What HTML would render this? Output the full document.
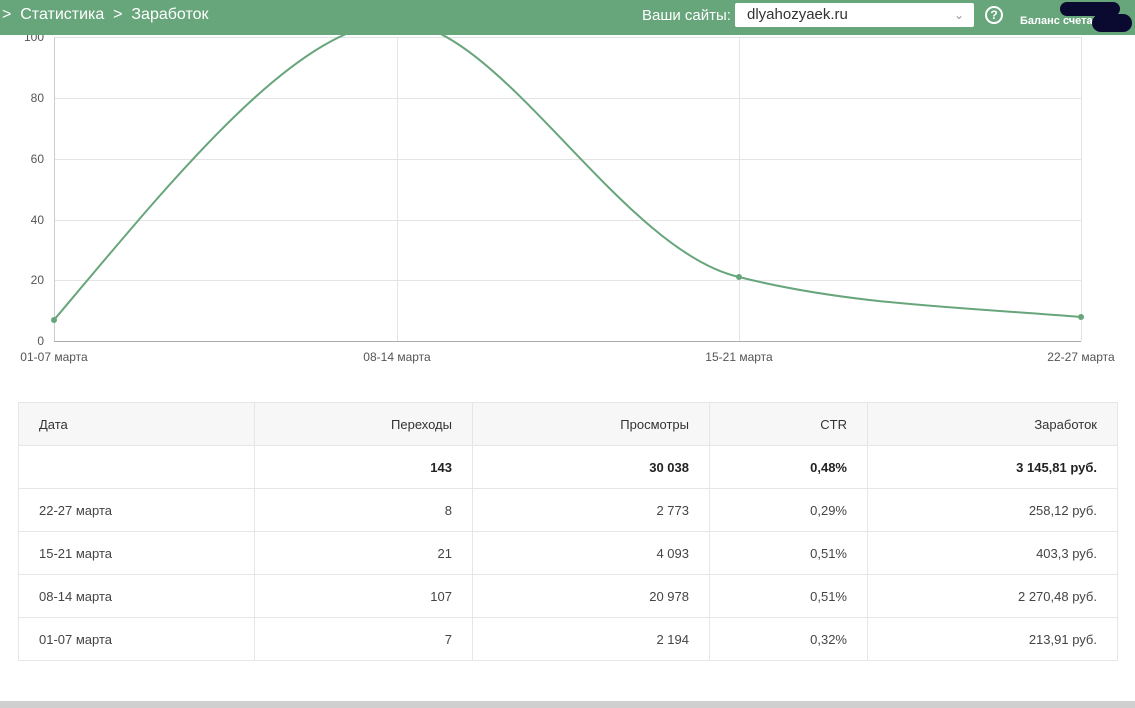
<!DOCTYPE html><html><head><meta charset="utf-8"><style>
body{margin:0;width:1135px;height:708px;overflow:hidden;background:#fff;font-family:"Liberation Sans",sans-serif;position:relative}
.hdr{position:absolute;left:0;top:0;width:1135px;height:35px;background:#67a57b;color:#fff;z-index:2}
.hdr .bc{position:absolute;left:2px;top:6px;font-size:16px}
.sel{position:absolute;left:735px;top:3px;width:239px;height:24px;background:#fff;border-radius:2px;color:#333;font-size:15px;line-height:24px;padding-left:12px;box-sizing:border-box}
table{position:absolute;left:18px;top:402px;width:1100px;border-collapse:collapse;font-size:13px;color:#444}
td,th{border:1px solid #e6e6e6;height:42px;padding:0 20px;text-align:right;font-weight:normal}
th{background:#f7f7f7;color:#333}
td:first-child,th:first-child{text-align:left}
.b td{font-weight:bold;color:#222}
table th:nth-child(1){width:195px}table th:nth-child(2){width:177px}table th:nth-child(3){width:196px}table th:nth-child(4){width:117px}
</style></head><body>
<div class="hdr"><div class="bc"><span style="font-weight:100">&gt;</span>&nbsp; Статистика &nbsp;<span>&gt;</span>&nbsp; Заработок</div>
<div style="position:absolute;left:642px;top:7px;font-size:15px">Ваши сайты:</div>
<div class="sel">dlyahozyaek.ru<span style="position:absolute;right:10px;top:0;color:#999;font-size:12px">&#8964;</span></div>
<div style="position:absolute;left:985px;top:6px;width:18px;height:18px;border:2px solid #fff;border-radius:50%;box-sizing:border-box;font-size:12px;text-align:center;line-height:15px;font-weight:bold">?</div>
<div style="position:absolute;left:1020px;top:15px;font-size:11px;font-weight:bold">Баланс счета</div>
<div style="position:absolute;left:1060px;top:2px;width:60px;height:14px;background:#0a0a30;border-radius:8px"></div>
<div style="position:absolute;left:1092px;top:14px;width:40px;height:18px;background:#0a0a30;border-radius:9px"></div>
</div>
<svg style="position:absolute;left:0;top:0" width="1135" height="380">
<g stroke="#e4e4e4" stroke-width="1">
<line x1="54" y1="37.5" x2="1081" y2="37.5"/><line x1="54" y1="98.5" x2="1081" y2="98.5"/><line x1="54" y1="159.5" x2="1081" y2="159.5"/><line x1="54" y1="220.5" x2="1081" y2="220.5"/><line x1="54" y1="280.5" x2="1081" y2="280.5"/>
<line x1="397.5" y1="37" x2="397.5" y2="341"/><line x1="739.5" y1="37" x2="739.5" y2="341"/><line x1="1081.5" y1="37" x2="1081.5" y2="341"/>
</g>
<line x1="54" y1="341.5" x2="1081" y2="341.5" stroke="#aaa"/><line x1="54.5" y1="37" x2="54.5" y2="341" stroke="#ccc"/>
<g font-size="12" fill="#555" text-anchor="end"><text x="44" y="41">100</text><text x="44" y="102">80</text><text x="44" y="163">60</text><text x="44" y="224">40</text><text x="44" y="284">20</text><text x="44" y="345">0</text></g>
<g font-size="12" fill="#555" text-anchor="middle"><text x="54" y="361">01-07 марта</text><text x="397" y="361">08-14 марта</text><text x="739" y="361">15-21 марта</text><text x="1081" y="361">22-27 марта</text></g>
<path d="M54 320 C180 170,300 22,397 22 C500 22,620 250,739 277 C850 305,960 307,1081 317" fill="none" stroke="#67a57b" stroke-width="2"/>
<g fill="#67a57b"><circle cx="54" cy="320" r="3"/><circle cx="739" cy="277" r="3"/><circle cx="1081" cy="317" r="3"/></g>
</svg>
<table>
<tr><th>Дата</th><th>Переходы</th><th>Просмотры</th><th>CTR</th><th>Заработок</th></tr>
<tr class="b"><td></td><td>143</td><td>30 038</td><td>0,48%</td><td>3 145,81 руб.</td></tr>
<tr><td>22-27 марта</td><td>8</td><td>2 773</td><td>0,29%</td><td>258,12 руб.</td></tr>
<tr><td>15-21 марта</td><td>21</td><td>4 093</td><td>0,51%</td><td>403,3 руб.</td></tr>
<tr><td>08-14 марта</td><td>107</td><td>20 978</td><td>0,51%</td><td>2 270,48 руб.</td></tr>
<tr><td>01-07 марта</td><td>7</td><td>2 194</td><td>0,32%</td><td>213,91 руб.</td></tr>
</table>
<div style="position:absolute;left:0;top:701px;width:1135px;height:7px;background:#cfcfcf"></div>
</body></html>
